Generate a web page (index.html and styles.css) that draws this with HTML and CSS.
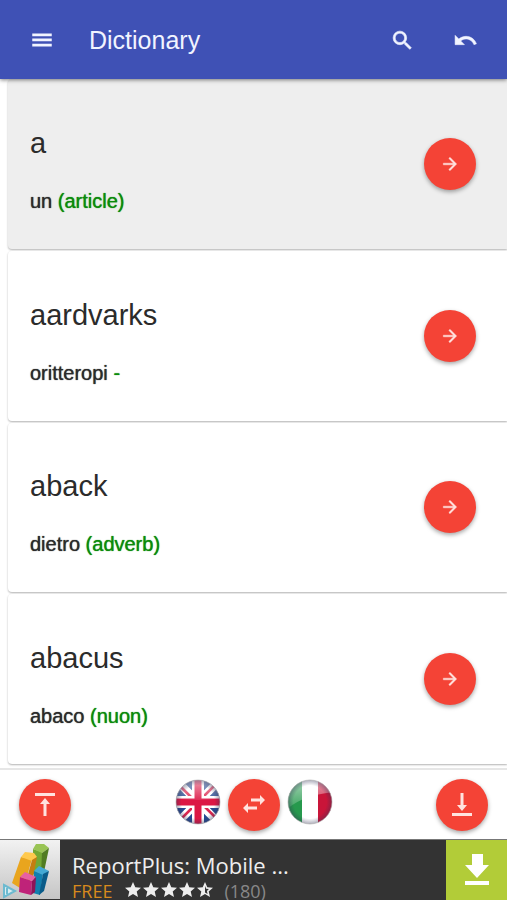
FILE: index.html
```
<!DOCTYPE html>
<html lang="en">
<head>
<meta charset="utf-8">
<meta name="viewport" content="width=device-width, initial-scale=1">
<title>Dictionary</title>
<link rel="stylesheet" href="styles.css">
</head>
<body>
<header class="toolbar">
  <button class="icon-button" type="button" aria-label="Menu">
    <svg width="26" height="26" viewBox="0 0 24 24"><path d="M3 18h18v-2.500H3zM3 13.200h18v-2.500H3zM3 6v2.500h18V6z"/></svg>
  </button>
  <h1 class="toolbar-title">Dictionary</h1>
  <button class="icon-button" type="button" aria-label="Search">
    <svg width="25" height="25" viewBox="0 0 24 24"><path stroke="#f1f4ff" stroke-width=".6" d="M15.500 14h-.790l-.280-.270A6.470 6.470 0 0 0 16 9.500 6.500 6.500 0 1 0 9.500 16c1.610 0 3.090-.590 4.230-1.570l.270.280v.790l5 4.990L20.490 19l-4.990-5zm-6 0C7.010 14 5 11.990 5 9.500S7.010 5 9.500 5 14 7.010 14 9.500 11.990 14 9.500 14z"/></svg>
  </button>
  <button class="icon-button" type="button" aria-label="Undo">
    <svg width="25" height="25" viewBox="0 0 24 24"><path stroke="#f1f4ff" stroke-width=".5" d="M12.500 8c-2.650 0-5.050.990-6.900 2.600L2 7v9h9l-3.620-3.620c1.390-1.160 3.160-1.880 5.120-1.880 3.540 0 6.550 2.310 7.600 5.500l2.370-.780C21.080 11.030 17.150 8 12.500 8z"/></svg>
  </button>
</header>

<main class="word-list">
  <article class="card card-selected">
    <div class="card-text"><h2 class="word">a</h2><p class="meaning">un <span class="kind">(article)</span></p></div>
    <button class="fab" type="button" aria-label="Open a"><svg width="20" height="20" viewBox="0 0 24 24"><path stroke="#ffe3df" stroke-width=".5" d="M12 4l-1.410 1.410L16.170 11H4v2h12.170l-5.580 5.590L12 20l8-8z"/></svg></button>
  </article>
  <article class="card">
    <div class="card-text"><h2 class="word">aardvarks</h2><p class="meaning">oritteropi <span class="kind">-</span></p></div>
    <button class="fab" type="button" aria-label="Open aardvarks"><svg width="20" height="20" viewBox="0 0 24 24"><path stroke="#ffe3df" stroke-width=".5" d="M12 4l-1.410 1.410L16.170 11H4v2h12.170l-5.580 5.590L12 20l8-8z"/></svg></button>
  </article>
  <article class="card">
    <div class="card-text"><h2 class="word">aback</h2><p class="meaning">dietro <span class="kind">(adverb)</span></p></div>
    <button class="fab" type="button" aria-label="Open aback"><svg width="20" height="20" viewBox="0 0 24 24"><path stroke="#ffe3df" stroke-width=".5" d="M12 4l-1.410 1.410L16.170 11H4v2h12.170l-5.580 5.590L12 20l8-8z"/></svg></button>
  </article>
  <article class="card">
    <div class="card-text"><h2 class="word">abacus</h2><p class="meaning">abaco <span class="kind">(nuon)</span></p></div>
    <button class="fab" type="button" aria-label="Open abacus"><svg width="20" height="20" viewBox="0 0 24 24"><path stroke="#ffe3df" stroke-width=".5" d="M12 4l-1.410 1.410L16.170 11H4v2h12.170l-5.580 5.590L12 20l8-8z"/></svg></button>
  </article>
</main>

<nav class="bottom-bar" aria-label="List and language controls">
  <button class="fab" type="button" aria-label="Go to top">
    <svg width="28" height="28" viewBox="0 0 28 28"><path d="M4 2h20v3H4zM14 7l5 6h-3.500v12h-3V13H9z"/></svg>
  </button>
  <div class="languages">
    <svg class="flag" width="48" height="48" viewBox="0 0 48 48" role="img" aria-label="English">
      <defs>
        <clipPath id="disc"><circle cx="24" cy="24" r="22"/></clipPath>
        <radialGradient id="rim" cx=".5" cy=".5" r=".5"><stop offset=".75" stop-color="#335" stop-opacity="0"/><stop offset="1" stop-color="#335" stop-opacity=".4"/></radialGradient>
        <linearGradient id="shine" x1="0" y1="0" x2="0" y2="1"><stop offset="0" stop-color="#fff" stop-opacity=".6"/><stop offset="1" stop-color="#fff" stop-opacity=".1"/></linearGradient>
      </defs>
      <g clip-path="url(#disc)">
        <path fill="#254a91" d="M0 0h48v48H0z"/>
        <path stroke="#fff" stroke-width="8" d="M4 4l40 40M44 4L4 44"/>
        <path stroke="#dc2850" stroke-width="2.500" d="M3 5l20 20M45 3L25 23M45 43L25 23M3 45l20-20"/>
        <path stroke="#fff" stroke-width="12" d="M24 0v48M0 24h48"/>
        <path stroke="#dc1744" stroke-width="7" d="M24 0v48M0 24h48"/>
        <path fill="url(#shine)" d="M0 0h48v20Q24 24 0 20z"/>
      </g>
      <circle cx="24" cy="24" r="22" fill="url(#rim)" stroke="#aaa" stroke-opacity=".6"/>
    </svg>
    <button class="fab" type="button" aria-label="Swap languages">
      <svg width="28" height="28" viewBox="0 0 28 28"><path d="M11 7.500h9V4l5 5-5 5v-3.500h-9zM17 15.500H8V12l-5 5 5 5v-3.500h9z"/></svg>
    </button>
    <svg class="flag" width="48" height="48" viewBox="0 0 48 48" role="img" aria-label="Italian">
      <g clip-path="url(#disc)">
        <path fill="#26994d" d="M0 0h16v48H0z"/>
        <path fill="#fff" d="M16 0h16v48H16z"/>
        <path fill="#c91539" d="M32 0h16v48H32z"/>
        <path fill="url(#shine)" d="M0 0h48v14Q16 17 0 32z"/>
      </g>
      <circle cx="24" cy="24" r="22" fill="url(#rim)" stroke="#aaa" stroke-opacity=".6"/>
    </svg>
  </div>
  <button class="fab" type="button" aria-label="Go to bottom">
    <svg width="28" height="28" viewBox="0 0 28 28"><path d="M4 22h20v3H4zM12.500 2h3v12H19l-5 6-5-6h3.500z"/></svg>
  </button>
</nav>

<aside class="ad" aria-label="Advertisement">
  <svg class="ad-image" width="60" height="59" viewBox="0 0 60 59" aria-hidden="true">
    <defs><linearGradient id="paper" x1="0" y1="0" x2="0" y2="1"><stop offset="0" stop-color="#f2f2f2"/><stop offset="1" stop-color="#c5c5c5"/></linearGradient></defs>
    <path fill="url(#paper)" d="M0 0h60v59H0z"/>
    <path fill="#74a834" d="M33 9l9 3v26l-9-4z"/><path fill="#99c455" d="M33 9l3-5h8l5 4-7 5z"/><path fill="#517c22" d="M42 13l7-5-5 24-3 2z"/>
    <path fill="#e9a51e" d="M21 17l11 2-9 31-11-7z"/><path fill="#ffc94d" d="M21 17l4-5 9 1 3 4-5 4z"/><path fill="#c57d12" d="M32 20l5-3-4 20-9 12z"/>
    <path fill="#127fae" d="M34 31l9 3-3 21-7-2z"/><path fill="#43a9d4" d="M34 31l5-5 10 5-6 4z"/><path fill="#095b89" d="M43 34l6-3-5 20-5 4z"/>
    <path fill="#bf2379" d="M20 37l12 4-1 14-12-3z"/><path fill="#e760a3" d="M20 37l5-5 11 5-4 4z"/><path fill="#8d1458" d="M32 41l4-4-1 15-4 3z"/>
    <path fill="#d9edf2" stroke="#6dbad0" stroke-width="2" d="M4 45l11 6-11 6zM7 48v6"/>
  </svg>
  <div class="ad-copy">
    <a class="ad-title" href="#">ReportPlus: Mobile ...</a>
    <div class="ad-details">
      <span class="ad-price">FREE</span>
      <svg class="stars" width="90" height="16" viewBox="0 0 90 16" role="img" aria-label="4.5 stars">
        <defs><path id="star" d="M8 0l2.300 5.300 5.700.500-4.300 3.800L13 15l-5-3-5 3 1.300-5.400L0 5.800l5.700-.5z"/></defs>
        <use href="#star"/><use href="#star" x="18"/><use href="#star" x="36"/><use href="#star" x="54"/>
        <path fill-rule="evenodd" d="M80 0l2.300 5.300 5.700.500-4.300 3.800L85 15l-5-3-5 3 1.300-5.400L72 5.800l5.700-.5zM80 4v6.500l2.600 1.500-.7-3 2-1.900-2.700-.3z"/>
      </svg>
      <span class="ad-count">(180)</span>
    </div>
  </div>
  <button class="ad-download" type="button" aria-label="Download">
    <svg width="26" height="32" viewBox="0 0 26 32"><path d="M8 0h11v11h6L13 24 1 11h7zM1 27h24v4H1z"/></svg>
  </button>
</aside>
</body>
</html>
```
FILE: styles.css
```
* {
  box-sizing: border-box;
}

body {
  margin: 0;
  min-height: 100vh;
  display: flex;
  flex-direction: column;
  background: #fff;
  color: #2b2b2b;
  font-family: "Liberation Sans", Arial, sans-serif;
  overflow-x: hidden;
}

h1, h2, p {
  margin: 0;
  font-weight: 400;
}

button {
  border: 0;
  padding: 0;
  display: flex;
  align-items: center;
  justify-content: center;
  flex: none;
  cursor: pointer;
}

svg {
  display: block;
  flex: none;
}

.toolbar {
  position: relative;
  z-index: 1;
  height: 79px;
  padding: 1px 18px 0;
  display: flex;
  align-items: center;
  gap: 15px;
  background: #3f51b5;
  color: #f1f4ff;
  box-shadow: 0 1px 4px rgba(0, 0, 0, 0.5);
}

.icon-button {
  width: 48px;
  height: 48px;
  background: none;
  fill: #f1f4ff;
}

.toolbar-title {
  flex: 1;
  padding-left: 8px;
  font-size: 25px;
  line-height: 32px;
}

.word-list {
  flex: 1;
  display: grid;
  grid-auto-rows: 1fr;
  gap: 2px;
  padding: 0 0 4px 8px;
}

.card {
  display: flex;
  align-items: center;
  padding: 0 31px 0 22px;
  border-radius: 4px 0 0 4px;
  background: #fff;
  box-shadow: 0 1px 2px rgba(0, 0, 0, 0.3);
}

.card-selected {
  background: #eee;
}

.card-text {
  flex: 1;
  display: grid;
  gap: 28px;
  padding-top: 10px;
}

.word {
  font-size: 29px;
  line-height: 36px;
}

.meaning {
  font-size: 20px;
  line-height: 24px;
  text-shadow: 0 0 1px currentColor;
}

.kind {
  color: #0b8a0b;
}

.fab {
  width: 52px;
  height: 52px;
  border-radius: 50%;
  background: #f44336;
  fill: #ffe3df;
  box-shadow: 0 2px 4px rgba(0, 0, 0, 0.35);
}

.bottom-bar {
  height: 71px;
  padding: 0 19px;
  display: flex;
  align-items: center;
  justify-content: space-between;
  border-top: 2px solid #e6e6e6;
}

.languages {
  display: flex;
  align-items: center;
  gap: 6px;
}

.flag {
  margin-bottom: 6px;
}

.ad {
  height: 61px;
  display: flex;
  background: #333;
  border-top: 1px solid #777;
  font-family: "Open Sans", "Noto Sans", sans-serif;
  overflow: hidden;
}

.ad-copy {
  flex: 1;
  min-width: 0;
  padding: 10px 12px 0;
}

.ad-title {
  display: block;
  color: #eee;
  font-size: 22px;
  line-height: 30px;
  text-decoration: none;
  white-space: nowrap;
}

.ad-details {
  display: flex;
  padding-top: 2px;
  line-height: 18px;
}

.ad-price {
  color: #d88a1d;
  font-size: 18px;
}

.stars {
  margin: 0 9px 0 13px;
  fill: #eee;
}

.ad-count {
  color: #888;
  font-size: 18px;
}

.ad-download {
  width: 61px;
  background: #b2cc38;
  fill: #fff;
}
```
